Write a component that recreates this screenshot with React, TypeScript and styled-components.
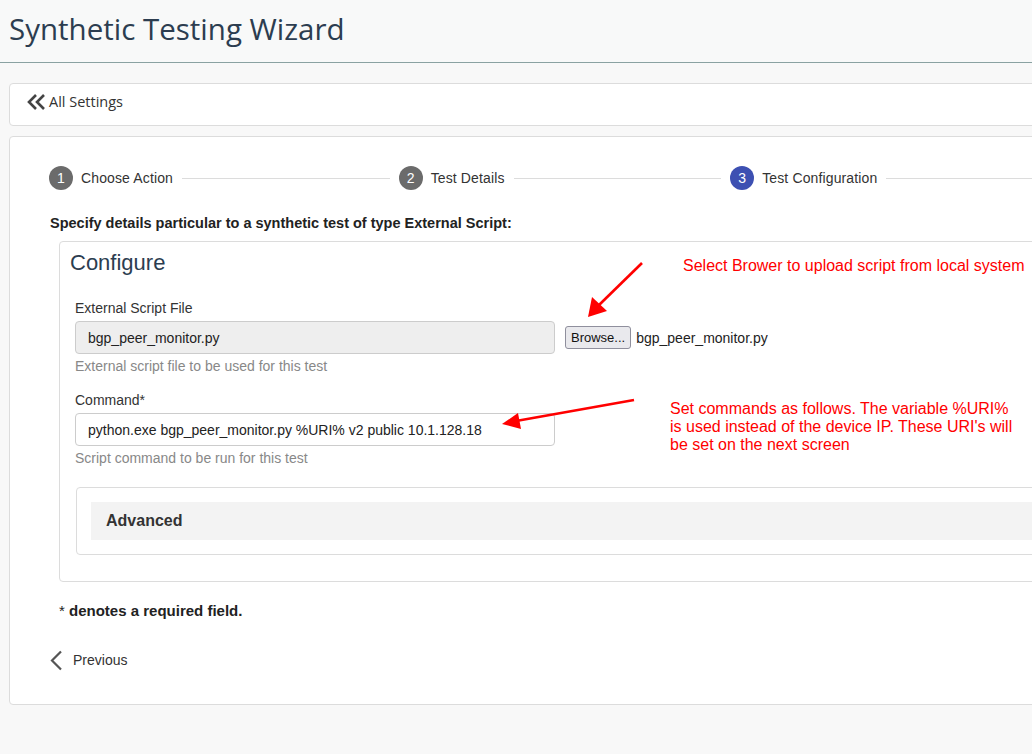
import React from "react";
import styled, { createGlobalStyle } from "styled-components";

const Global = createGlobalStyle`
  html, body { margin: 0; padding: 0; background: #f8f8f8; overflow: hidden; }
  body { font-family: "Liberation Sans", Arial, sans-serif; color: #333; }
  * { box-sizing: border-box; }
`;

const Page = styled.div`
  position: relative;
  width: 1032px;
  height: 754px;
  overflow: hidden;
  background: #f8f8f8;
`;

const Header = styled.header`
  height: 63px;
  width: 1200px;
  background: #f8f9f9;
  border-bottom: 1px solid #8aa2a2;
  display: flex;
  align-items: center;
  padding: 0 0 5px 9px;
`;

const Title = styled.h1`
  margin: 0;
  font-family: "Open Sans", sans-serif;
  font-weight: 400;
  font-size: 29.5px;
  color: #2c3d50;
`;

const Content = styled.div`
  width: 1144px;
  padding: 20px 0 0 9px;
  display: flex;
  flex-direction: column;
  gap: 10px;
`;

const Card = styled.div`
  background: #fff;
  border: 1px solid #dcdcdc;
  border-radius: 4px;
`;

const BackBar = styled(Card)`
  height: 43px;
  display: flex;
  align-items: center;
  padding: 0 0 6px 16px;
  gap: 1px;
  font-family: "Open Sans", sans-serif;
  font-size: 14.5px;
  color: #333;
`;

const MainCard = styled(Card)`
  padding: 29px 40px 34px 39px;
`;

const Steps = styled.div`
  display: flex;
  align-items: center;
  height: 24px;
`;

const Circle = styled.span<{ $active?: boolean }>`
  width: 24px;
  height: 24px;
  border-radius: 50%;
  background: ${(p) => (p.$active ? "#3d50b2" : "#6b6b6b")};
  color: #fff;
  font-size: 14px;
  display: flex;
  align-items: center;
  justify-content: center;
  flex: none;
`;

const StepLabel = styled.span`
  font-size: 14px;
  letter-spacing: 0.13px;
  color: #333;
  margin: 0 9px 0 8px;
  white-space: nowrap;
`;

const StepLine = styled.span`
  flex: 1;
  height: 1px;
  background: #dcdcdc;
  margin-right: 9px;
`;

const Intro = styled.p`
  margin: 25px 0 0 1px;
  font-size: 14.5px;
  font-weight: 700;
  color: #222;
  line-height: 17px;
`;

const Panel = styled.div`
  margin: 9px 0 0 10px;
  border: 1px solid #dcdcdc;
  border-radius: 4px;
  padding: 9px 0 26px 0;
`;

const PanelTitle = styled.h2`
  margin: 0 0 0 10px;
  font-size: 22px;
  font-weight: 400;
  line-height: 24px;
  color: #2c3d50;
`;

const Form = styled.div`
  padding: 23px 0 0 15px;
  display: flex;
  flex-direction: column;
`;

const Label = styled.label`
  font-size: 14px;
  line-height: 20px;
  color: #333;
`;

const FieldRow = styled.div`
  display: flex;
  align-items: center;
  margin-top: 3px;
`;

const Input = styled.div<{ $readOnly?: boolean }>`
  width: 480px;
  height: 33px;
  border: 1px solid #cccccc;
  border-radius: 4px;
  background: ${(p) => (p.$readOnly ? "#eeeeee" : "#ffffff")};
  padding: 0 12px;
  display: flex;
  align-items: center;
  font-size: 14px;
  color: #222;
`;

const BrowseButton = styled.button`
  margin-left: 10px;
  height: 23px;
  padding: 0 5px;
  font-family: "Liberation Sans", Arial, sans-serif;
  font-size: 13px;
  color: #111;
  background: #e9e9ed;
  border: 1px solid #8f8f9d;
  border-radius: 3px;
`;

const FileName = styled.span`
  margin-left: 5px;
  font-size: 14px;
  color: #222;
`;

const Help = styled.div`
  margin-top: 2px;
  font-size: 14px;
  line-height: 20px;
  color: #888;
`;

const Spacer = styled.div<{ $h: number }>`
  height: ${(p) => p.$h}px;
`;

const AdvancedBox = styled.div`
  margin-left: 1px;
  border: 1px solid #dcdcdc;
  border-radius: 4px;
  padding: 14px 0 14px 14px;
`;

const AdvancedHead = styled.div`
  height: 38px;
  background: #f3f3f3;
  display: flex;
  align-items: center;
  padding-left: 15px;
  font-size: 16px;
  font-weight: 700;
  color: #333;
`;

const Required = styled.p`
  margin: 20px 0 0 10px;
  font-size: 15px;
  line-height: 18px;
  color: #222;
  b { font-weight: 700; }
`;

const Prev = styled.div`
  margin-top: 30px;
  display: flex;
  align-items: center;
  gap: 10px;
  margin-left: 1px;
  font-size: 14px;
  color: #333;
  height: 20px;
`;

const Note = styled.div<{ $x: number; $y: number }>`
  position: absolute;
  left: ${(p) => p.$x}px;
  top: ${(p) => p.$y}px;
  font-size: 16px;
  line-height: 18px;
  color: #ff0000;
  white-space: nowrap;
`;

const ArrowLayer = styled.svg`
  position: absolute;
  left: 0;
  top: 0;
  pointer-events: none;
`;

const steps = [
  { n: 1, label: "Choose Action" },
  { n: 2, label: "Test Details" },
  { n: 3, label: "Test Configuration", active: true },
];

export default function App() {
  return (
    <Page>
      <Global />
      <Header>
        <Title>Synthetic Testing Wizard</Title>
      </Header>
      <Content>
        <BackBar>
          <svg width="22" height="18" viewBox="0 0 22 18">
            <polyline points="10,2 3,9 10,16" fill="none" stroke="#444" strokeWidth="2.6" />
            <polyline points="18,2 11,9 18,16" fill="none" stroke="#444" strokeWidth="2.6" />
          </svg>
          <span>All Settings</span>
        </BackBar>
        <MainCard>
          <Steps>
            {steps.map((s) => (
              <React.Fragment key={s.n}>
                <Circle $active={s.active}>{s.n}</Circle>
                <StepLabel>{s.label}</StepLabel>
                <StepLine />
              </React.Fragment>
            ))}
          </Steps>
          <Intro>Specify details particular to a synthetic test of type External Script:</Intro>
          <Panel>
            <PanelTitle>Configure</PanelTitle>
            <Form>
              <Label>External Script File</Label>
              <FieldRow>
                <Input $readOnly>bgp_peer_monitor.py</Input>
                <BrowseButton>Browse...</BrowseButton>
                <FileName>bgp_peer_monitor.py</FileName>
              </FieldRow>
              <Help>External script file to be used for this test</Help>
              <Spacer $h={14} />
              <Label>Command*</Label>
              <FieldRow>
                <Input>python.exe bgp_peer_monitor.py %URI% v2 public 10.1.128.18</Input>
              </FieldRow>
              <Help>Script command to be run for this test</Help>
              <Spacer $h={19} />
              <AdvancedBox>
                <AdvancedHead>Advanced</AdvancedHead>
              </AdvancedBox>
            </Form>
          </Panel>
          <Required>
            * <b>denotes a required field.</b>
          </Required>
          <Prev>
            <svg width="13" height="21" viewBox="0 0 13 21">
              <polyline points="11,1.5 2,10.5 11,19.5" fill="none" stroke="#555" strokeWidth="2.2" />
            </svg>
            <span>Previous</span>
          </Prev>
        </MainCard>
      </Content>

      <Note $x={683} $y={257}>Select Brower to upload script from local system</Note>
      <Note $x={670} $y={400}>
        Set commands as follows. The variable %URI%
        <br />
        is used instead of the device IP. These URI's will
        <br />
        be set on the next screen
      </Note>
      <ArrowLayer width="1032" height="754" viewBox="0 0 1032 754">
        <line x1="642" y1="263" x2="598" y2="306" stroke="#ff0000" strokeWidth="2.6" />
        <polygon points="588,317 592,297 607,311" fill="#ff0000" />
        <line x1="634" y1="400" x2="516" y2="421" stroke="#ff0000" strokeWidth="2.6" />
        <polygon points="502,424 518,413 521,429" fill="#ff0000" />
      </ArrowLayer>
    </Page>
  );
}
